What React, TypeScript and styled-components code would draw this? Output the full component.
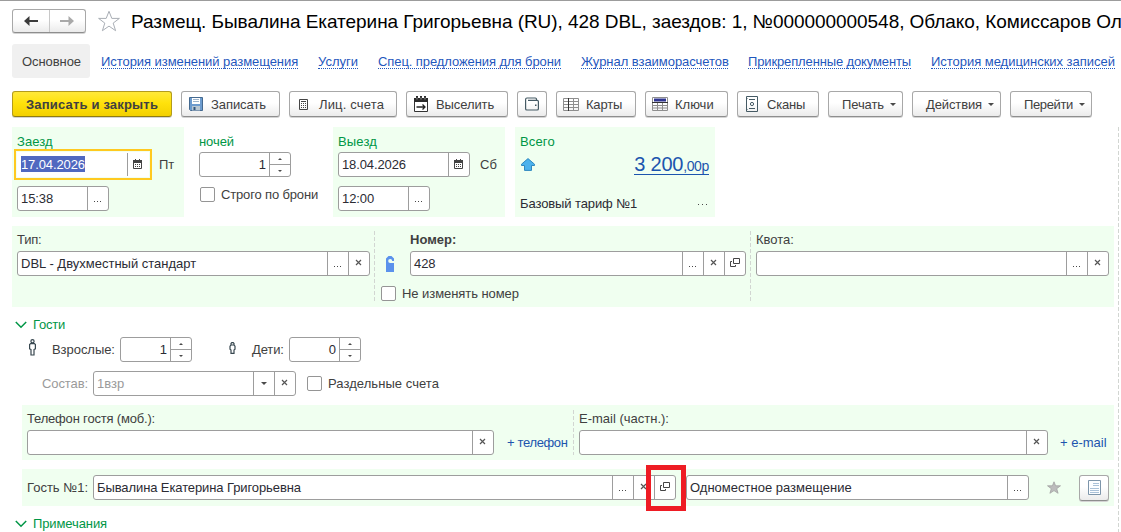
import React from 'react';
import styled, { createGlobalStyle, css } from 'styled-components';

const GlobalStyle = createGlobalStyle`
  * { box-sizing: border-box; }
  body {
    margin: 0;
    background: #fff;
    font: 13px/16px "Liberation Sans", Arial, sans-serif;
    color: #404040;
    overflow: hidden;
  }
  svg { display: block; flex: none; }
`;

const dashes = css`
  background: repeating-linear-gradient(to bottom, #d2d6d2 0 4px, transparent 4px 6px);
`;

const Page = styled.main`
  width: 1121px;
  height: 532px;
  overflow: hidden;
  border-top: 1px solid #9c9c9c;
  padding-left: 12px;
`;

const Text = styled.span<{ $ls?: number; $bold?: boolean; $color?: string }>`
  white-space: pre;
  flex: none;
  letter-spacing: ${p => p.$ls ?? 0}px;
  font-weight: ${p => (p.$bold ? 700 : 400)};
  color: ${p => p.$color ?? 'inherit'};
`;

const Header = styled.header`
  display: flex;
  align-items: center;
  height: 25px;
  margin-top: 8px;
`;

const raised = css`
  border: 1px solid #a8a8a8;
  border-bottom-color: #8e8e8e;
  border-radius: 3px;
  background: linear-gradient(#fff 0%, #fff 45%, #ebebeb 100%);
  box-shadow: 0 1px 0 #d4d4d4;
`;

const NavButtons = styled.div`
  ${raised}
  display: flex;
  width: 74px;
  height: 24px;
  margin-bottom: 1px;
  flex: none;
`;

const NavButton = styled.div`
  flex: 1;
  display: flex;
  align-items: center;
  justify-content: center;
  & + & { border-left: 1px solid #c8c8c8; }
`;

const StarSlot = styled.div`
  margin: 0 10px 2px 11px;
`;

const Title = styled.h1`
  margin: 0;
  font-size: 19px;
  line-height: 24px;
  font-weight: 400;
  color: #000;
  letter-spacing: -0.05px;
  white-space: pre;
`;

const Tabs = styled.nav`
  display: flex;
  align-items: center;
  height: 34px;
  margin-top: 10px;
`;

const ActiveTab = styled.div`
  width: 78px;
  height: 34px;
  line-height: 35px;
  padding-left: 10px;
  margin-right: 11px;
  border-radius: 3px;
  background: #f0f0f0;
  letter-spacing: -0.07px;
  flex: none;
`;

const TabLink = styled.a<{ $w: number; $ls: number }>`
  width: ${p => p.$w}px;
  margin-right: 20px;
  height: 14px;
  line-height: 14px;
  margin-top: 1px;
  flex: none;
  color: #1f57bd;
  letter-spacing: ${p => p.$ls}px;
  white-space: nowrap;
  border-bottom: 1px dotted #1f57bd;
`;

const Toolbar = styled.div`
  display: flex;
  gap: 9px;
  height: 26px;
  margin-top: 13px;
`;

const Button = styled.div<{ $w: number; $pad?: number; $gap?: number; $primary?: boolean }>`
  ${raised}
  display: flex;
  align-items: center;
  flex: none;
  width: ${p => p.$w}px;
  height: 26px;
  padding-left: ${p => p.$pad ?? 8}px;
  gap: ${p => p.$gap ?? 7}px;
  ${p => p.$primary && css`
    border-color: #b39c1c;
    border-bottom-color: #8f7c10;
    background: linear-gradient(#ffe93a 0%, #ffe20c 45%, #f3d000 100%);
  `}
  & > span { padding-top: 1px; }
`;

const Form = styled.div`
  display: flex;
  height: 405px;
  margin-top: 10px;
`;

const Main = styled.div`
  width: 1102px;
  flex: none;
`;

const EdgeLine = styled.div`
  ${dashes}
  width: 1px;
  margin-left: 4px;
`;

const Row = styled.div<{ $h?: number; $gap?: number; $mt?: number; $pl?: number }>`
  display: flex;
  align-items: center;
  height: ${p => (p.$h ? p.$h + 'px' : 'auto')};
  gap: ${p => p.$gap ?? 0}px;
  margin-top: ${p => p.$mt ?? 0}px;
  padding-left: ${p => p.$pl ?? 0}px;
`;

const Stay = styled.section`
  display: flex;
  height: 90px;
`;

const Cell = styled.div<{ $w: number; $green?: boolean; $mr?: number; $pl?: number }>`
  width: ${p => p.$w}px;
  flex: none;
  margin-right: ${p => p.$mr ?? 0}px;
  padding: 7px 0 0 ${p => p.$pl ?? 5}px;
  background: ${p => (p.$green ? '#f0fff0' : 'transparent')};
`;

const Heading = styled.div<{ $ls?: number }>`
  height: 15px;
  color: #009646;
  letter-spacing: ${p => p.$ls ?? 0}px;
`;

const Field = styled.div<{ $w: number; $focus?: boolean; $muted?: boolean }>`
  display: flex;
  flex: none;
  width: ${p => p.$w}px;
  height: 25px;
  background: #fff;
  border: 1px solid #9d9d9d;
  border-radius: 3px;
  color: ${p => (p.$muted ? '#9a9a9a' : '#2b2b33')};
  ${p => p.$focus && css`
    border-color: transparent;
    border-radius: 0;
    outline: 2px solid #ffc920;
    outline-offset: 1px;
  `}
`;

const Value = styled.div<{ $right?: boolean; $ls?: number }>`
  flex: 1;
  min-width: 0;
  padding: 0 3px;
  line-height: 24px;
  white-space: nowrap;
  letter-spacing: ${p => p.$ls ?? 0}px;
  text-align: ${p => (p.$right ? 'right' : 'left')};
`;

const Selected = styled.span`
  display: inline-block;
  height: 16px;
  line-height: 17px;
  background: #5068c0;
  color: #fff;
`;

const Addon = styled.div`
  width: 21px;
  flex: none;
  display: flex;
  align-items: center;
  justify-content: center;
  border-left: 1px solid #9d9d9d;
`;

const Stepper = styled.div`
  width: 21px;
  flex: none;
  display: flex;
  flex-direction: column;
  border-left: 1px solid #9d9d9d;
`;

const Step = styled.div`
  flex: 1;
  display: flex;
  align-items: center;
  justify-content: center;
  & + & { border-top: 1px solid #9d9d9d; }
`;

const CheckBox = styled.div`
  width: 15px;
  height: 15px;
  flex: none;
  border: 1px solid #959595;
  border-radius: 2px;
  background: #fff;
`;

const Amount = styled.div`
  display: flex;
  align-items: baseline;
  height: 21px;
  line-height: 21px;
  font-size: 20px;
  color: #1c55ae;
  border-bottom: 1px solid #1c55ae;
  letter-spacing: -0.25px;
  white-space: pre;
  small { font-size: 14px; letter-spacing: -0.35px; }
`;

const Total = styled.div`
  display: flex;
  justify-content: space-between;
  align-items: center;
  height: 25px;
  margin-top: 3px;
  padding: 0 6px 0 1px;
`;

const Tariff = styled.div`
  display: flex;
  justify-content: space-between;
  margin-top: 19px;
  padding-right: 8px;
`;

const RoomPanel = styled.section`
  display: flex;
  height: 81px;
  margin-top: 9px;
  background: #f0fff0;
`;

const Divider = styled.div<{ $h: number; $mt: number }>`
  ${dashes}
  width: 1px;
  flex: none;
  height: ${p => p.$h}px;
  margin-top: ${p => p.$mt}px;
`;

const Column = styled.div<{ $w: number; $pl: number }>`
  width: ${p => p.$w}px;
  flex: none;
  padding: 6px 0 0 ${p => p.$pl}px;
`;

const ContactPanel = styled.section`
  display: flex;
  height: 55px;
  margin: 9px 0 0 10px;
  background: #f0fff0;
`;

const GuestPanel = styled.section`
  position: relative;
  display: flex;
  align-items: center;
  height: 37px;
  margin: 9px 0 0 10px;
  padding-left: 5px;
  background: #f0fff0;
`;

const Highlight = styled.div`
  position: absolute;
  left: 624px;
  top: -4px;
  width: 40px;
  height: 46px;
  border: 5px solid #ee1c24;
`;

const DocButton = styled.div`
  ${raised}
  width: 30px;
  height: 26px;
  margin-left: 18px;
  display: flex;
  align-items: center;
  justify-content: center;
`;

const Space = styled.div<{ $w: number }>`
  width: ${p => p.$w}px;
  flex: none;
`;

const FigureSlot = styled.div`
  align-self: flex-start;
  width: 7px;
  height: 20px;
  padding-top: 1px;
  display: flex;
  align-items: center;
`;

const Dots = ({ wide }: { wide?: boolean }) => (
  <svg width={wide ? 9 : 8} height="12" viewBox={wide ? '0 0 9 12' : '0 0 8 12'} fill="#484848">
    <path d={wide ? 'M0 8h1v1H0zM4 8h1v1H4zM8 8h1v1H8z' : 'M0 8h1v1H0zM3 8h1v1H3zM6 8h1v1H6z'} />
  </svg>
);
const Cross = () => (
  <svg width="8" height="9" viewBox="0 0 8 9" fill="none" stroke="#555" strokeWidth="1.2">
    <path d="M1 1l5 5M6 1l-5 5" />
  </svg>
);
const OpenIcon = () => (
  <svg width="10" height="11" viewBox="0 0 10 11" fill="none" stroke="#444">
    <path d="M3.5 .5h6v5h-6zM2 3.5H.5v5h5V7" />
  </svg>
);
const Calendar = () => (
  <svg width="10" height="11" viewBox="0 0 10 11">
    <path d="M.5 2h8v7.500h-8z" fill="#fff" stroke="#444" />
    <path d="M0 1h9v3H0zM2 0h1v1H2zM6 0h1v1H6z" fill="#444" />
    <path d="M2 5h1v1H2zM4 5h1v1H4zM6 5h1v1H6zM2 7h1v1H2zM4 7h1v1H4zM6 7h1v1H6z" fill="#444" />
  </svg>
);
const Caret = ({ up, small }: { up?: boolean; small?: boolean }) => (
  <svg width={small ? 4 : 6} height={small ? 2 : 3} viewBox="0 0 6 3" fill="#4a4a4a">
    <path d={up ? 'M0 3h6L3 0z' : 'M0 0h6L3 3z'} />
  </svg>
);
const Chevron = () => (
  <svg width="12" height="8" viewBox="0 0 12 8" fill="none" stroke="#009646" strokeWidth="1.5">
    <path d="M.8 1l5.200 5.300L11.200 1" />
  </svg>
);
const Arrow = ({ color, flip }: { color: string; flip?: boolean }) => (
  <svg width="14" height="10" viewBox="0 0 14 10" fill={color}>
    <path transform={flip ? 'matrix(-1 0 0 1 14 0)' : undefined} d="M0 5l5.500-5v4H14v2H5.500v4z" />
  </svg>
);
const StarOutline = () => (
  <svg width="24" height="22" viewBox="0 0 24 22" fill="#fff" stroke="#a9aeb5">
    <path d="M12 1.300l2.800 7.100h7.600l-6.200 4.700 2.400 7.600L12 16.100l-6.600 4.600 2.400-7.600-6.200-4.700h7.600z" />
  </svg>
);
const Floppy = () => (
  <svg width="14" height="14" viewBox="0 0 14 14">
    <path d="M.5 .5h13v13h-12l-1-1z" fill="#6c9bce" stroke="#44698f" />
    <path d="M3 1h8v6H3z" fill="#fff" />
    <path d="M4 2.500h6M4 4.500h6" stroke="#9db4cb" />
    <path d="M3 9h8v4.500H3z" fill="#b9c7d2" />
    <path d="M4.500 10h2v3h-2z" fill="#31567e" />
  </svg>
);
const Calculator = () => (
  <svg width="9" height="11" viewBox="0 0 9 11" fill="none" stroke="#444">
    <path d="M.5 .5h8v10h-8zM2 2.500h5" />
    <path d="M2 4.500h5M2 6.500h5M2 8.500h5" strokeDasharray="1 1" />
  </svg>
);
const CheckoutIcon = () => (
  <svg width="14" height="16" viewBox="0 0 14 16">
    <path d="M.5 3h13v12.500H.5z" fill="#fff" stroke="#333" />
    <path d="M0 2h14v4H0zM2 0h2v2H2zM6 0h2v2H6zM10 0h2v2h-2z" fill="#2b2b2b" />
    <path d="M3 1.500v2M7 1.500v2M11 1.500v2" stroke="#999" />
    <path d="M2.500 11h8.500M8.500 8.500L11 11l-2.500 2.500" fill="none" stroke="#222" strokeWidth="1.300" />
  </svg>
);
const Wallet = () => (
  <svg width="14" height="14" viewBox="0 0 14 14" fill="none" stroke="#455a64" strokeWidth="1.200">
    <path d="M11.500 3.400V2.200A1.200 1.200 0 0 0 10.300 1H2A1.400 1.400 0 0 0 .6 2.400v9.300A1.300 1.300 0 0 0 1.900 13h10.200a1.300 1.300 0 0 0 1.300-1.300V4.600a1.200 1.200 0 0 0-1.200-1.200H3" />
    <path d="M10 7.500h1.500v1.500H10z" fill="#455a64" stroke="none" />
  </svg>
);
const CardsIcon = () => (
  <svg width="16" height="13" viewBox="0 0 16 13" fill="none" stroke="#8e8e8e">
    <path d="M.5 .5h15v12H.5zM0 3.500h16M0 6.500h16M0 9.500h16M10.500 0v13" />
    <path d="M5.500 0v13" stroke="#333" />
  </svg>
);
const KeysIcon = () => (
  <svg width="16" height="14" viewBox="0 0 16 14" fill="none" stroke="#8e8e8e">
    <path d="M.5 5.500h15v8H.5zM0 8.500h16M0 11h16M5.500 6v8M10.500 6v8" />
    <path d="M.5 .5h15v5H.5z" fill="#fff" />
    <path d="M2 1.500h12v3H2z" fill="#2f3590" stroke="none" />
    <path d="M0 5.500h16" stroke="#333" />
  </svg>
);
const ScanIcon = () => (
  <svg width="12" height="16" viewBox="0 0 12 16" fill="none" stroke="#455a64">
    <path d="M.5 .5h11v15H.5zM3 3.500h6M3 12.500h6M.5 2.500h1M.5 13.500h1" />
    <circle cx="6" cy="8" r="1.600" />
  </svg>
);
const UpArrow = () => (
  <svg width="14" height="13" viewBox="0 0 14 13" fill="#4cb2ec" stroke="#2f88bf" strokeLinejoin="round">
    <path d="M7 .6l6.500 5.600v1.300h-3v4.900h-7V7.500h-3V6.200z" />
  </svg>
);
const DoorHanger = () => (
  <svg width="8" height="16" viewBox="0 0 8 16" fill="#5b92ec">
    <path d="M0 16V2.500L2.500 0h3L8 2.500V5H6.200A2 2 0 1 0 4.300 7H8v9z" />
  </svg>
);
const Person = ({ child }: { child?: boolean }) => (
  <FigureSlot>
    {child ? (
      <svg width="7" height="12" viewBox="0 0 7 12" fill="none" stroke="#37474f" strokeWidth="1.200">
        <path d="M2 3V1.500L2.800.600h1.400L5 1.500V3M2 3h3l1 1.200v3L5 8v3.400H2V8l-1-.8v-3z" />
      </svg>
    ) : (
      <svg width="7" height="17" viewBox="0 0 7 17" fill="none" stroke="#37474f" strokeWidth="1.200">
        <circle cx="3.500" cy="2.200" r="1.600" />
        <path d="M1.600 4.600h3.800l1 1v4.200l-1.400.7V16H2v-5.500l-1.400-.7V5.600z" />
      </svg>
    )}
  </FigureSlot>
);
const StarSolid = () => (
  <svg width="14" height="13" viewBox="0 0 14 13" fill="#bcbcbc" stroke="#a2a2a2" strokeWidth=".8">
    <path d="M7 .8l1.600 4H13.500L9.700 7.700l1.400 4.600L7 9.600l-4.100 2.700 1.400-4.600L.5 4.800h4.900z" />
  </svg>
);
const DocIcon = () => (
  <svg width="13" height="15" viewBox="0 0 13 15" fill="none">
    <path d="M.5 .5h12v14H.5z" fill="#fbfdff" stroke="#7d95aa" />
    <path d="M5 3.500h6M5 5.500h6M2 8.500h9M2 10.500h9M2 12.500h9" stroke="#a9c1d8" />
  </svg>
);

const StepperField = ({ w, value }: { w: number; value: string }) => (
  <Field $w={w}>
    <Value $right>{value}</Value>
    <Stepper>
      <Step><Caret up small /></Step>
      <Step><Caret small /></Step>
    </Stepper>
  </Field>
);

const links: [string, number, number][] = [
  ['История изменений размещения', 197, -0.06],
  ['Услуги', 40, 0],
  ['Спец. предложения для брони', 183, -0.08],
  ['Журнал взаиморасчетов', 147, -0.04],
  ['Прикрепленные документы', 163, -0.13],
  ['История медицинских записей', 184, -0.03],
];

export default function App() {
  return (
    <Page>
      <GlobalStyle />
      <Header>
        <NavButtons>
          <NavButton><Arrow color="#3c3c3c" /></NavButton>
          <NavButton><Arrow color="#a9a9a9" flip /></NavButton>
        </NavButtons>
        <StarSlot><StarOutline /></StarSlot>
        <Title>Размещ. Бывалина Екатерина Григорьевна (RU), 428 DBL, заездов: 1, №000000000548, Облако, Комиссаров Ол</Title>
      </Header>

      <Tabs>
        <ActiveTab>Основное</ActiveTab>
        {links.map(([label, w, ls]) => <TabLink key={label} $w={w} $ls={ls}>{label}</TabLink>)}
      </Tabs>

      <Toolbar>
        <Button $w={160} $primary $pad={13}><Text $bold $ls={0.18}>Записать и закрыть</Text></Button>
        <Button $w={99} $pad={7} $gap={8}><Floppy /><Text $ls={-0.07}>Записать</Text></Button>
        <Button $w={108} $pad={9} $gap={11}><Calculator /><Text $ls={0.16}>Лиц. счета</Text></Button>
        <Button $w={102} $pad={7} $gap={8}><CheckoutIcon /><Text $ls={-0.1}>Выселить</Text></Button>
        <Button $w={30} $pad={7}><Wallet /></Button>
        <Button $w={80} $pad={6}><CardsIcon /><Text $ls={-0.2}>Карты</Text></Button>
        <Button $w={83} $pad={6}><KeysIcon /><Text>Ключи</Text></Button>
        <Button $w={82} $pad={8} $gap={9}><ScanIcon /><Text $ls={-0.2}>Сканы</Text></Button>
        <Button $w={75} $pad={13} $gap={6}><Text $ls={-0.1}>Печать</Text><Caret /></Button>
        <Button $w={89} $pad={13} $gap={6}><Text $ls={-0.12}>Действия</Text><Caret /></Button>
        <Button $w={82} $pad={13} $gap={6}><Text $ls={-0.36}>Перейти</Text><Caret /></Button>
      </Toolbar>

      <Form>
        <Main>
          <Stay>
            <Cell $w={172} $green $mr={10}>
              <Heading $ls={0.1}>Заезд</Heading>
              <Row $mt={3}>
                <Field $w={132} $focus>
                  <Value $ls={-0.11}><Selected>17.04.2026</Selected></Value>
                  <Addon><Calendar /></Addon>
                </Field>
                <Space $w={10} />
                <Text>Пт</Text>
              </Row>
              <Row $mt={9}>
                <Field $w={92}><Value $ls={-0.1}>15:38</Value><Addon><Dots /></Addon></Field>
              </Row>
            </Cell>
            <Cell $w={129} $mr={10}>
              <Heading $ls={-0.08}>ночей</Heading>
              <Row $mt={3}><StepperField w={92} value="1" /></Row>
              <Row $mt={10} $pl={1} $h={15} $gap={6}>
                <CheckBox /><Text $ls={-0.15}>Строго по брони</Text>
              </Row>
            </Cell>
            <Cell $w={172} $green $mr={10}>
              <Heading $ls={0.15}>Выезд</Heading>
              <Row $mt={3}>
                <Field $w={132}>
                  <Value $ls={-0.11}>18.04.2026</Value>
                  <Addon><Calendar /></Addon>
                </Field>
                <Space $w={10} />
                <Text>Сб</Text>
              </Row>
              <Row $mt={9}>
                <Field $w={92}><Value $ls={-0.1}>12:00</Value><Addon><Dots /></Addon></Field>
              </Row>
            </Cell>
            <Cell $w={200} $green>
              <Heading $ls={0.15}>Всего</Heading>
              <Total>
                <UpArrow />
                <Amount>3 200<small>,00р</small></Amount>
              </Total>
              <Tariff>
                <Text $color="#2b2b33" $ls={-0.1}>Базовый тариф №1</Text>
                <Dots wide />
              </Tariff>
            </Cell>
          </Stay>

          <RoomPanel>
            <Column $w={362} $pl={5}>
              <Text $ls={-0.2}>Тип:</Text>
              <Row $mt={3}>
                <Field $w={353}>
                  <Value>DBL - Двухместный стандарт</Value>
                  <Addon><Dots /></Addon><Addon><Cross /></Addon>
                </Field>
              </Row>
            </Column>
            <Divider $h={70} $mt={5} />
            <Column $w={375} $pl={6}>
              <Row $pl={29}><Text $bold>Номер:</Text></Row>
              <Row $mt={3} $pl={5} $gap={16}>
                <DoorHanger />
                <Field $w={336}>
                  <Value $ls={-0.1}>428</Value>
                  <Addon><Dots /></Addon><Addon><Cross /></Addon><Addon><OpenIcon /></Addon>
                </Field>
              </Row>
              <Row $mt={10} $h={15} $gap={6}>
                <CheckBox /><Text $ls={-0.06}>Не изменять номер</Text>
              </Row>
            </Column>
            <Divider $h={70} $mt={5} />
            <Column $w={363} $pl={5}>
              <Text>Квота:</Text>
              <Row $mt={3}>
                <Field $w={353}><Value /><Addon><Dots /></Addon><Addon><Cross /></Addon></Field>
              </Row>
            </Column>
          </RoomPanel>

          <Row $mt={9} $h={18} $pl={3} $gap={6}><Chevron /><Text $color="#009646" $ls={-0.2}>Гости</Text></Row>
          <Row $mt={3} $h={25} $pl={17}>
            <Person />
            <Space $w={16} /><Text $ls={-0.05}>Взрослые:</Text>
            <Space $w={5} /><StepperField w={72} value="1" />
            <Space $w={37} /><Person child />
            <Space $w={16} /><Text $ls={-0.1}>Дети:</Text>
            <Space $w={5} /><StepperField w={72} value="0" />
          </Row>
          <Row $mt={9} $h={25} $pl={30}>
            <Text $color="#9a9a9a" $ls={-0.1}>Состав:</Text>
            <Space $w={5} />
            <Field $w={203} $muted>
              <Value>1взр</Value>
              <Addon><Caret /></Addon><Addon><Cross /></Addon>
            </Field>
            <Space $w={11} /><CheckBox />
            <Space $w={6} /><Text $ls={0.06}>Раздельные счета</Text>
          </Row>

          <ContactPanel>
            <Column $w={551} $pl={5}>
              <Text $ls={-0.18}>Телефон гостя (моб.):</Text>
              <Row $mt={3} $gap={13}>
                <Field $w={467}><Value /><Addon><Cross /></Addon></Field>
                <Text $color="#1c55ae" $ls={-0.35}>+ телефон</Text>
              </Row>
            </Column>
            <Divider $h={45} $mt={5} />
            <Column $w={540} $pl={5}>
              <Text>E-mail (частн.):</Text>
              <Row $mt={3} $gap={12}>
                <Field $w={469}><Value /><Addon><Cross /></Addon></Field>
                <Text $color="#1c55ae">+ e-mail</Text>
              </Row>
            </Column>
          </ContactPanel>

          <GuestPanel>
            <Text>Гость №1:</Text>
            <Space $w={5} />
            <Field $w={583}>
              <Value $ls={-0.1}>Бывалина Екатерина Григорьевна</Value>
              <Addon><Dots /></Addon><Addon><Cross /></Addon><Addon><OpenIcon /></Addon>
            </Field>
            <Space $w={10} />
            <Field $w={343}>
              <Value>Одноместное размещение</Value>
              <Addon><Dots /></Addon>
            </Field>
            <Space $w={18} />
            <StarSolid />
            <DocButton><DocIcon /></DocButton>
            <Highlight />
          </GuestPanel>

          <Row $mt={9} $h={18} $pl={3} $gap={6}><Chevron /><Text $color="#009646" $ls={-0.1}>Примечания</Text></Row>
        </Main>
        <EdgeLine />
      </Form>
    </Page>
  );
}
